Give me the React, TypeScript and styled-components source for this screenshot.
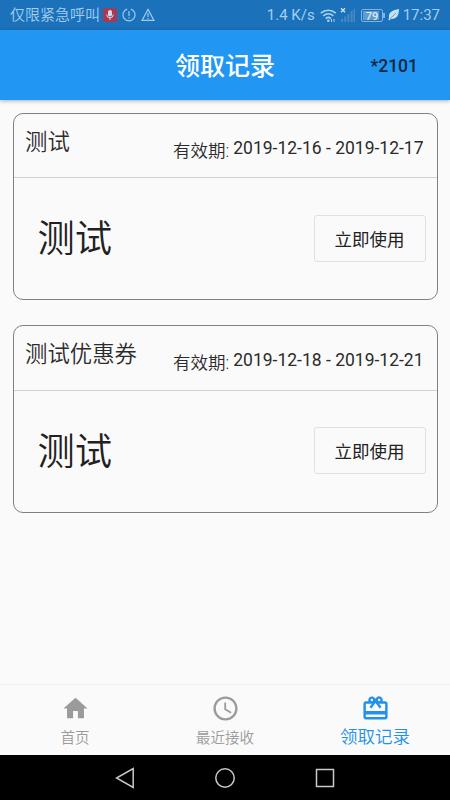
import * as React from 'react'
import styled, { createGlobalStyle } from 'styled-components'
import { MdAccessTime, MdHome, MdRedeem } from 'react-icons/md'

const coupons = [
  { id: 1, name: '测试', content: '测试', period: '2019-12-16 - 2019-12-17' },
  { id: 2, name: '测试优惠券', content: '测试', period: '2019-12-18 - 2019-12-21' },
]

const tabs = [
  { label: '首页', icon: MdHome, active: false },
  { label: '最近接收', icon: MdAccessTime, active: false },
  { label: '领取记录', icon: MdRedeem, active: true },
]

const StatusBar: React.FC = () => (
  <Status>
    <StatusGroup>
      <Carrier>仅限紧急呼叫</Carrier>
      <svg width="14" height="14" viewBox="0 0 14 14">
        <rect width="14" height="14" rx="2" fill="#a93852" />
        <rect x="5" y="2" width="4" height="6.5" rx="2" fill="#d5dbea" />
        <path d="M3.7 6.5a3.3 3.3 0 0 0 6.6 0M7 9.8V12" fill="none" stroke="#d5dbea" />
      </svg>
      <svg width="14" height="14" viewBox="0 0 14 14" fill="none" stroke="#9ccbf0" strokeWidth="1.2">
        <path d="M5.2 1.1a6 6 0 1 0 3.6 0M7 3v5M7 9.2v1.4" />
      </svg>
      <svg width="14" height="14" viewBox="0 0 14 14" fill="none" stroke="#9ccbf0" strokeWidth="1.2">
        <path d="M7 1.4L13 12.4H1zM7 5v4M7 10v1.3" />
      </svg>
    </StatusGroup>
    <StatusGroup>
      <Speed>1.4 K/s</Speed>
      <svg width="65" height="20" viewBox="0 0 65 20">
        <g fill="none" stroke="#a9d2f2" strokeWidth="1.6">
          <path d="M.8 8.2c4.4-4 10.6-4 15 0M3.2 11c3-2.8 7.2-2.8 10.2 0M5.7 13.6c1.6-1.5 3.6-1.5 5.2 0" />
        </g>
        <circle cx="8.3" cy="15.7" r="1.3" fill="#a9d2f2" />
        <path d="M11.5 14v3M14 14v3" stroke="#a9d2f2" />
        <path d="M21 3.2l4 4M25 3.2l-4 4" stroke="#d0e5f5" strokeWidth="1.3" />
        <g fill="#4488c4">
          <path d="M21 14h2v3h-2zM24.2 11.5h2V17h-2zM27.4 9h2v8h-2zM30.6 6h2v11h-2zM33.4 4h1.6v13h-1.6z" />
        </g>
        <rect x="41.5" y="4.5" width="21" height="12" rx="1.5" fill="none" stroke="#7fb3de" />
        <rect x="43" y="6" width="16" height="9" fill="#5e9bce" />
        <path d="M64 8v5" stroke="#a9d2f2" strokeWidth="1.4" />
        <text x="52" y="14.5" fontFamily="Roboto, sans-serif" fontSize="11" fontWeight="500" fill="#dcecf8" textAnchor="middle">79</text>
      </svg>
      <Leaf width="12" height="14" viewBox="0 0 12 14">
        <path d="M11 1C5 2 0 4 1 10l-.5 2 1 .5 1-1.6C8 11.5 11 8 11 1z" fill="#c6e1f6" />
        <path d="M2 10.8L8 5" stroke="#4990cc" strokeWidth=".8" />
      </Leaf>
      <Clock>17:37</Clock>
    </StatusGroup>
  </Status>
)

const App: React.FC = () => {
  return (
    <Screen>
      <GlobalStyle />
      <StatusBar />
      <AppBar>
        <Title>领取记录</Title>
        <Account>*2101</Account>
      </AppBar>
      <List>
        {coupons.map(coupon => (
          <Card key={coupon.id}>
            <CardHeader>
              <CardName>{coupon.name}</CardName>
              <Period>
                <PeriodLabel>有效期:</PeriodLabel>
                <PeriodValue>{coupon.period}</PeriodValue>
              </Period>
            </CardHeader>
            <CardBody>
              <Content>{coupon.content}</Content>
              <UseButton>立即使用</UseButton>
            </CardBody>
          </Card>
        ))}
      </List>
      <TabBar>
        {tabs.map(({ label, icon: Icon, active }) => (
          <Tab key={label} $active={active}>
            <Icon size={29} />
            <TabLabel $active={active}>{label}</TabLabel>
          </Tab>
        ))}
      </TabBar>
      <SystemBar>
        <svg width="20" height="22" viewBox="0 0 20 22">
          <path d="M18.2 1.5v19L1.5 11z" />
        </svg>
        <svg width="20" height="22" viewBox="0 0 20 22">
          <circle cx="10" cy="11" r="9.2" />
        </svg>
        <svg width="20" height="22" viewBox="0 0 20 22">
          <rect x="1.5" y="2.5" width="17" height="17" />
        </svg>
      </SystemBar>
    </Screen>
  )
}

const GlobalStyle = createGlobalStyle`
  * {
    box-sizing: border-box;
  }
  body {
    margin: 0;
    font-family: Roboto, 'Noto Sans CJK SC', sans-serif;
  }
  svg {
    display: block;
    flex-shrink: 0;
  }
`
const Screen = styled.div`
  display: flex;
  flex-direction: column;
  width: 450px;
  height: 800px;
  background: #fafafa;
  color: #2b2b2b;
  white-space: nowrap;
`
const Status = styled.div`
  display: flex;
  justify-content: space-between;
  height: 30px;
  padding: 0 10px;
  background: #1b72ba;
  color: #a3cef0;
`
const StatusGroup = styled.div`
  display: flex;
  align-items: center;
  gap: 5px;
`
const Carrier = styled.span`
  width: 88px;
  font-size: 15px;
  font-weight: 350;
  line-height: 32px;
`
const Speed = styled.span`
  font-size: 15px;
  line-height: 32px;
`
const Clock = styled.span`
  font-size: 15px;
  line-height: 32px;
`
const Leaf = styled.svg`
  margin: 0 -2px 0 -2px;
`
const AppBar = styled.header`
  display: grid;
  grid-template-columns: 1fr auto 1fr;
  align-items: center;
  height: 70px;
  background: #2196f3;
  box-shadow: 0 1px 4px rgba(0, 0, 0, 0.3);
`
const Title = styled.h1`
  grid-column: 2;
  margin: 0;
  padding-top: 4px;
  color: #fff;
  font-size: 25px;
  font-weight: 500;
  line-height: 36px;
`
const Account = styled.span`
  justify-self: end;
  padding: 1px 32px 0 0;
  color: #10273c;
  font-size: 17.5px;
  font-weight: 500;
`
const List = styled.main`
  display: flex;
  flex: 1;
  flex-direction: column;
  gap: 25px;
  padding: 12.5px 12.5px 0;
`
const Card = styled.section`
  height: 187.5px;
  border: 1.5px solid #808080;
  border-radius: 10px;
`
const CardHeader = styled.div`
  display: flex;
  justify-content: space-between;
  height: 64.5px;
  padding: 0 13px 0 11.5px;
  border-bottom: 1.5px solid #d2d2d2;
`
const CardName = styled.h2`
  margin: 0;
  font-size: 22.4px;
  font-weight: 350;
  line-height: 56px;
`
const Period = styled.div`
  display: flex;
  gap: 4px;
  font-size: 17.5px;
`
const PeriodLabel = styled.span`
  font-weight: 350;
  line-height: 74px;
`
const PeriodValue = styled.span`
  line-height: 69px;
`
const CardBody = styled.div`
  display: flex;
  align-items: center;
  justify-content: space-between;
  height: 120px;
  padding: 0 11px 0 24px;
`
const Content = styled.span`
  padding-top: 2px;
  color: #212121;
  font-size: 37.3px;
  font-weight: 350;
  line-height: 54px;
`
const UseButton = styled.button`
  width: 112px;
  height: 47px;
  padding: 0;
  border: 1.5px solid #e0e0e0;
  border-radius: 3px;
  background: transparent;
  color: #212121;
  font-family: inherit;
  font-size: 17.5px;
  font-weight: 400;
`
const TabBar = styled.nav`
  display: grid;
  grid-template-columns: repeat(3, 1fr);
  height: 71px;
  border-top: 1px solid #eeeeee;
`
const Tab = styled.div<{ $active: boolean }>`
  display: flex;
  flex-direction: column;
  align-items: center;
  padding-top: 9px;
  color: ${({ $active }) => ($active ? '#2191ea' : '#9b9b9b')};
`
const TabLabel = styled.span<{ $active: boolean }>`
  font-size: ${({ $active }) => ($active ? '17.5px' : '14.6px')};
  font-weight: 350;
  line-height: ${({ $active }) => ($active ? '28px' : '30px')};
`
const SystemBar = styled.footer`
  display: flex;
  align-items: center;
  justify-content: center;
  gap: 80px;
  height: 45px;
  background: #000;
  fill: none;
  stroke: #c9c9c9;
  stroke-width: 1.5;
`

export default App
